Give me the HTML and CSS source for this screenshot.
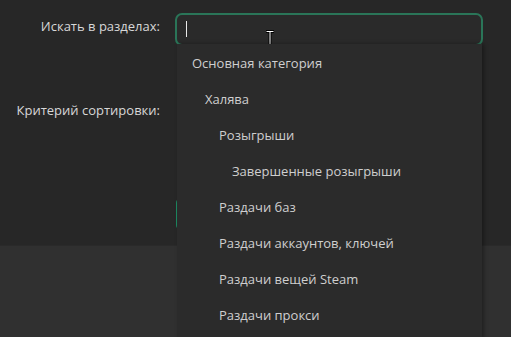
FILE: index.html
```html
<!DOCTYPE html>
<html lang="ru">
<head>
    <meta charset="UTF-8">
    <meta name="viewport" content="width=device-width, initial-scale=1.0">
    <title>Поиск</title>
    <link rel="stylesheet" href="styles.css">
</head>
<body>
    <div class="panel">
        <div class="row">
            <label class="label" for="nodes">Искать в разделах:</label>
            <div class="field">
                <div class="input" id="nodes">
                    <span class="caret"></span>
                </div>
                <!-- mouse pointer over the input -->
                <svg class="ibeam" width="10" height="18" viewBox="0 0 10 18">
                    <path d="M1 1.5h8M5 1.5v15M1 16.5h8" stroke="#000" stroke-width="3" fill="none"/>
                    <path d="M1.5 1.5h7M5 1.5v15M1.5 16.5h7" stroke="#fff" stroke-width="1" fill="none"/>
                </svg>
                <ul class="dropdown">
                    <li class="level-0">Основная категория</li>
                    <li class="level-1">Халява</li>
                    <li class="level-2">Розыгрыши</li>
                    <li class="level-3">Завершенные розыгрыши</li>
                    <li class="level-2">Раздачи баз</li>
                    <li class="level-2">Раздачи аккаунтов, ключей</li>
                    <li class="level-2">Раздачи вещей Steam</li>
                    <li class="level-2">Раздачи прокси</li>
                </ul>
            </div>
        </div>

        <div class="row sort">
            <label class="label">Критерий сортировки:</label>
            <div class="field"></div>
        </div>

        <div class="row submit-row">
            <span class="label"></span>
            <button class="submit" type="submit" aria-label="Найти"></button>
        </div>
    </div>
</body>
</html>
```

FILE: styles.css
```css
body {
    margin: 0;
    background-color: #303030;
    font-family: "Open Sans", "Noto Sans", sans-serif;
    font-size: 13px;
    color: #d8d8d8;
    height: 337px;
    overflow: hidden;
}
.panel {
    height: 232px;
    padding-top: 13px;
    background-color: #272727;
    border-bottom: 1px solid #2a2a2a;
}
.row {
    display: flex;
    gap: 15px;
}
.label {
    width: 160px;
    flex: none;
    text-align: right;
    line-height: 20px;
    padding-top: 3px;
}
.field {
    position: relative;
    width: 308px;
}
.input {
    height: 29px;
    border: 2px solid #2a7558;
    border-radius: 7px;
    background-color: #2a2a2a;
    box-sizing: content-box;
}
.caret {
    display: block;
    width: 1px;
    height: 16px;
    margin: 6px 0 0 9px;
    background-color: #e8e8e8;
}
.ibeam {
    position: absolute;
    left: 90px;
    top: 17px;
}
.sort {
    margin-top: 51px;
}
.submit-row {
    margin-top: 79px;
}
.submit {
    width: 120px;
    height: 30px;
    margin-left: 1px;
    border: none;
    border-radius: 4px;
    background-color: #1d8a62;
}
.dropdown {
    position: absolute;
    left: 2px;
    top: 31px;
    width: 305px;
    height: 293px;
    margin: 0;
    padding: 1px 0 0;
    list-style: none;
    background-color: #2b2b2b;
    box-shadow: 2px 0 4px rgba(0, 0, 0, 0.35);
    z-index: 2;
}
.dropdown li {
    height: 36px;
    line-height: 36px;
    color: #cfcfcf;
    white-space: nowrap;
}
.level-0 { padding-left: 15px; }
.level-1 { padding-left: 28px; }
.level-2 { padding-left: 42px; }
.level-3 { padding-left: 55px; }
```
